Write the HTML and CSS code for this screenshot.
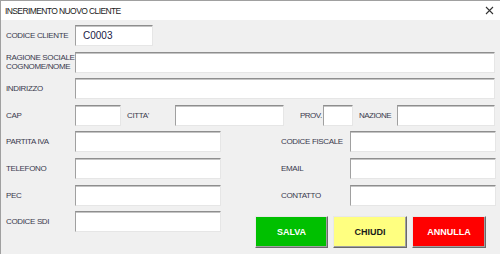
FILE: index.html
```html
<!DOCTYPE html>
<html lang="it">
<head>
  <meta charset="UTF-8" />
  <title>Inserimento nuovo cliente</title>
  <link rel="stylesheet" href="styles.css">
</head>
<body>

  <div class="window">
    <!-- barra del titolo -->
    <div class="titlebar">
      <span class="title">INSERIMENTO NUOVO CLIENTE</span>
      <svg class="close" width="9" height="9" viewBox="0 0 9 9">
        <path d="M1 1 L8 8 M8 1 L1 8" stroke="#333" stroke-width="1.1" fill="none"/>
      </svg>
    </div>

    <form class="form">
      <div class="row">
        <label class="lbl">CODICE CLIENTE</label>
        <input class="field code" type="text" value="C0003">
      </div>

      <div class="row">
        <label class="lbl">RAGIONE SOCIALE<br>COGNOME/NOME</label>
        <input class="field wide" type="text">
      </div>

      <div class="row">
        <label class="lbl">INDIRIZZO</label>
        <input class="field wide" type="text">
      </div>

      <div class="row">
        <label class="lbl">CAP</label>
        <input class="field cap" type="text">
        <label class="lbl citta">CITTA'</label>
        <input class="field city" type="text">
        <label class="lbl prov">PROV.</label>
        <input class="field prov-in" type="text">
        <label class="lbl naz">NAZIONE</label>
        <input class="field naz-in" type="text">
      </div>

      <div class="row">
        <div class="half">
          <label class="lbl">PARTITA IVA</label>
          <input class="field mid" type="text">
        </div>
        <label class="lbl">CODICE FISCALE</label>
        <input class="field mid" type="text">
      </div>

      <div class="row">
        <div class="half">
          <label class="lbl">TELEFONO</label>
          <input class="field mid" type="text">
        </div>
        <label class="lbl">EMAIL</label>
        <input class="field mid" type="text">
      </div>

      <div class="row">
        <div class="half">
          <label class="lbl">PEC</label>
          <input class="field mid" type="text">
        </div>
        <label class="lbl">CONTATTO</label>
        <input class="field mid" type="text">
      </div>

      <div class="row last">
        <div class="sdi">
          <label class="lbl">CODICE SDI</label>
          <input class="field mid" type="text">
        </div>
        <div class="buttons">
          <button type="button" class="btn salva">SALVA</button>
          <button type="button" class="btn chiudi">CHIUDI</button>
          <button type="button" class="btn annulla">ANNULLA</button>
        </div>
      </div>
    </form>
  </div>

</body>
</html>
```

FILE: styles.css
```css
body {
  margin: 0;
  width: 500px;
  height: 254px;
  overflow: hidden;
  font-family: "Liberation Sans", Arial, sans-serif;
}
.window {
  height: 254px;
  box-sizing: border-box;
  border-top: 1px solid #a0a0a0;
  border-left: 1px solid #a0a0a0;
  background: #f0f0f0;
}
.titlebar {
  height: 19px;
  background: #fff;
  display: flex;
  align-items: center;
  justify-content: space-between;
  padding: 0 6px 0 4px;
}
.title {
  font-size: 8.5px;
  color: #1a1a1a;
  letter-spacing: -0.6px;
}
.close {
  display: block;
}
.form {
  padding: 5px 0 0 5px;
  display: flex;
  flex-direction: column;
  gap: 5.6px;
}
.row {
  display: flex;
  align-items: center;
  height: 21px;
}
.lbl {
  width: 69px;
  flex: none;
  font-size: 8px;
  line-height: 9px;
  color: #3a3a4e;
  letter-spacing: -0.35px;
}
.field {
  height: 21px;
  box-sizing: border-box;
  margin: 0;
  padding: 0 0 0 7px;
  background: #fff;
  border: 1px solid;
  border-color: #8e8e8e #e6e6e6 #e6e6e6 #a0a0a0;
  box-shadow: inset 0 1px 0 #c4c4c4;
  font-family: "Liberation Sans", Arial, sans-serif;
  font-size: 10px;
  color: #202046;
  outline: none;
}
.code { width: 78px; }
.wide { width: 420px; }
.mid { width: 146px; }
.cap { width: 46px; }
.citta { width: 48px; margin-left: 6px; }
.city { width: 109px; }
.prov { width: 23px; margin-left: 16px; letter-spacing: -0.5px; }
.prov-in { width: 30px; }
.naz { width: 38px; margin-left: 6px; letter-spacing: -0.5px; }
.naz-in { width: 98px; }
.half {
  display: flex;
  align-items: center;
  width: 275px;
}
.sdi {
  display: flex;
  align-items: center;
}
.row.last {
  align-items: flex-start;
}
.sdi .lbl {
  height: 21px;
  display: flex;
  align-items: center;
}
.buttons {
  display: flex;
  gap: 5px;
  margin: 5px 0 0 34px;
}
.btn {
  width: 74px;
  height: 32px;
  box-sizing: border-box;
  border: 1px solid;
  border-color: #e8e8e8 #6a6a6a #6a6a6a #e8e8e8;
  box-shadow: inset -1px -1px 0 #a0a0a0;
  font-family: "Liberation Sans", Arial, sans-serif;
  font-size: 9px;
  font-weight: bold;
  cursor: pointer;
}
.salva {
  width: 73px;
  background: #00c000;
  color: #fff;
}
.chiudi {
  background: #ffff80;
  color: #1a1a1a;
}
.annulla {
  background: #ff0000;
  color: #fff;
}
```
